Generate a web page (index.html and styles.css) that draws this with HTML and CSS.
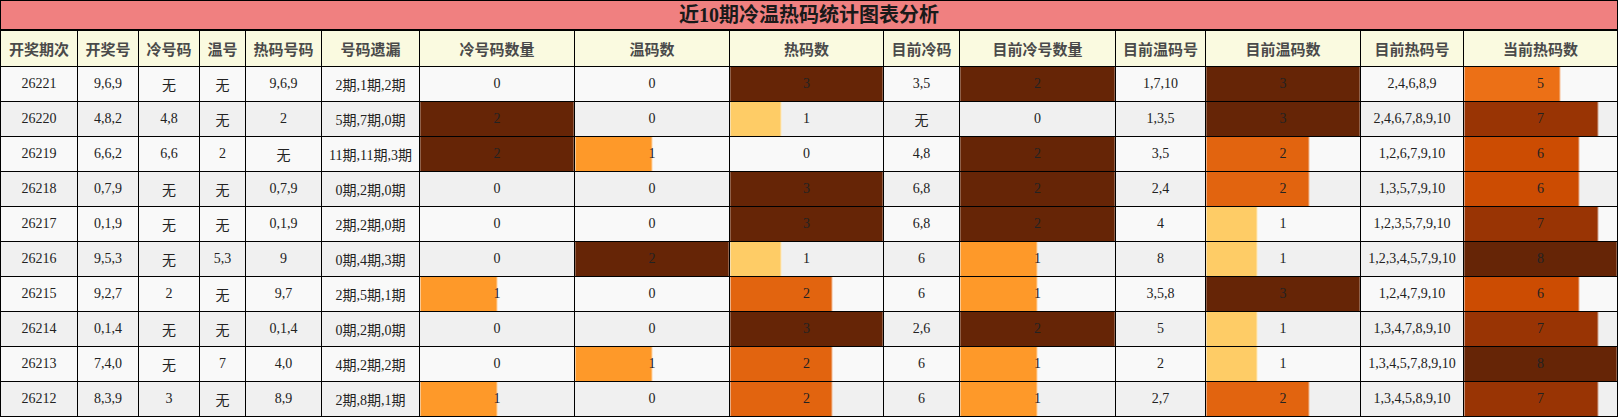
FILE: index.html
```html
<!DOCTYPE html>
<html lang="zh">
<head>
<meta charset="utf-8">
<title>近10期冷温热码统计图表分析</title>
<link rel="stylesheet" href="styles.css">
</head>
<body>
<table class="stats">
<colgroup>
<col class="c77"><col class="c61"><col class="c61"><col class="c46"><col class="c76"><col class="c98">
<col class="c155"><col class="c155"><col class="c154"><col class="c76"><col class="c156"><col class="c90">
<col class="c155"><col class="c103"><col class="c154">
</colgroup>
<thead>
<tr class="title-row"><th colspan="15" class="title">近10期冷温热码统计图表分析</th></tr>
<tr class="head-row">
<th>开奖期次</th><th>开奖号</th><th>冷号码</th><th>温号</th><th>热码号码</th><th>号码遗漏</th>
<th>冷号码数量</th><th>温码数</th><th>热码数</th><th>目前冷码</th><th>目前冷号数量</th><th>目前温码号</th>
<th>目前温码数</th><th>目前热码号</th><th>当前热码数</th>
</tr>
</thead>
<tbody>
<tr>
<td>26221</td><td>9,6,9</td><td>无</td><td>无</td><td>9,6,9</td><td>2期,1期,2期</td>
<td>0</td><td>0</td><td class="bar" style="--w:100%;--c:#662506">3</td><td>3,5</td><td class="bar" style="--w:100%;--c:#662506">2</td><td>1,7,10</td>
<td class="bar" style="--w:100%;--c:#662506">3</td><td>2,4,6,8,9</td><td class="bar" style="--w:62.5%;--c:#ec7016">5</td>
</tr>
<tr>
<td>26220</td><td>4,8,2</td><td>4,8</td><td>无</td><td>2</td><td>5期,7期,0期</td>
<td class="bar" style="--w:100%;--c:#662506">2</td><td>0</td><td class="bar" style="--w:33.33%;--c:#fecc66">1</td><td>无</td><td>0</td><td>1,3,5</td>
<td class="bar" style="--w:100%;--c:#662506">3</td><td>2,4,6,7,8,9,10</td><td class="bar" style="--w:87.5%;--c:#993404">7</td>
</tr>
<tr>
<td>26219</td><td>6,6,2</td><td>6,6</td><td>2</td><td>无</td><td>11期,11期,3期</td>
<td class="bar" style="--w:100%;--c:#662506">2</td><td class="bar" style="--w:50%;--c:#fe9929">1</td><td>0</td><td>4,8</td><td class="bar" style="--w:100%;--c:#662506">2</td><td>3,5</td>
<td class="bar" style="--w:66.67%;--c:#e2640f">2</td><td>1,2,6,7,9,10</td><td class="bar" style="--w:75%;--c:#cc4c02">6</td>
</tr>
<tr>
<td>26218</td><td>0,7,9</td><td>无</td><td>无</td><td>0,7,9</td><td>0期,2期,0期</td>
<td>0</td><td>0</td><td class="bar" style="--w:100%;--c:#662506">3</td><td>6,8</td><td class="bar" style="--w:100%;--c:#662506">2</td><td>2,4</td>
<td class="bar" style="--w:66.67%;--c:#e2640f">2</td><td>1,3,5,7,9,10</td><td class="bar" style="--w:75%;--c:#cc4c02">6</td>
</tr>
<tr>
<td>26217</td><td>0,1,9</td><td>无</td><td>无</td><td>0,1,9</td><td>2期,2期,0期</td>
<td>0</td><td>0</td><td class="bar" style="--w:100%;--c:#662506">3</td><td>6,8</td><td class="bar" style="--w:100%;--c:#662506">2</td><td>4</td>
<td class="bar" style="--w:33.33%;--c:#fecc66">1</td><td>1,2,3,5,7,9,10</td><td class="bar" style="--w:87.5%;--c:#993404">7</td>
</tr>
<tr>
<td>26216</td><td>9,5,3</td><td>无</td><td>5,3</td><td>9</td><td>0期,4期,3期</td>
<td>0</td><td class="bar" style="--w:100%;--c:#662506">2</td><td class="bar" style="--w:33.33%;--c:#fecc66">1</td><td>6</td><td class="bar" style="--w:50%;--c:#fe9929">1</td><td>8</td>
<td class="bar" style="--w:33.33%;--c:#fecc66">1</td><td>1,2,3,4,5,7,9,10</td><td class="bar" style="--w:100%;--c:#662506">8</td>
</tr>
<tr>
<td>26215</td><td>9,2,7</td><td>2</td><td>无</td><td>9,7</td><td>2期,5期,1期</td>
<td class="bar" style="--w:50%;--c:#fe9929">1</td><td>0</td><td class="bar" style="--w:66.67%;--c:#e2640f">2</td><td>6</td><td class="bar" style="--w:50%;--c:#fe9929">1</td><td>3,5,8</td>
<td class="bar" style="--w:100%;--c:#662506">3</td><td>1,2,4,7,9,10</td><td class="bar" style="--w:75%;--c:#cc4c02">6</td>
</tr>
<tr>
<td>26214</td><td>0,1,4</td><td>无</td><td>无</td><td>0,1,4</td><td>0期,2期,0期</td>
<td>0</td><td>0</td><td class="bar" style="--w:100%;--c:#662506">3</td><td>2,6</td><td class="bar" style="--w:100%;--c:#662506">2</td><td>5</td>
<td class="bar" style="--w:33.33%;--c:#fecc66">1</td><td>1,3,4,7,8,9,10</td><td class="bar" style="--w:87.5%;--c:#993404">7</td>
</tr>
<tr>
<td>26213</td><td>7,4,0</td><td>无</td><td>7</td><td>4,0</td><td>4期,2期,2期</td>
<td>0</td><td class="bar" style="--w:50%;--c:#fe9929">1</td><td class="bar" style="--w:66.67%;--c:#e2640f">2</td><td>6</td><td class="bar" style="--w:50%;--c:#fe9929">1</td><td>2</td>
<td class="bar" style="--w:33.33%;--c:#fecc66">1</td><td>1,3,4,5,7,8,9,10</td><td class="bar" style="--w:100%;--c:#662506">8</td>
</tr>
<tr>
<td>26212</td><td>8,3,9</td><td>3</td><td>无</td><td>8,9</td><td>2期,8期,1期</td>
<td class="bar" style="--w:50%;--c:#fe9929">1</td><td>0</td><td class="bar" style="--w:66.67%;--c:#e2640f">2</td><td>6</td><td class="bar" style="--w:50%;--c:#fe9929">1</td><td>2,7</td>
<td class="bar" style="--w:66.67%;--c:#e2640f">2</td><td>1,3,4,5,8,9,10</td><td class="bar" style="--w:87.5%;--c:#993404">7</td>
</tr>
</tbody>
</table>
</body>
</html>
```
FILE: styles.css
```css
html, body {
  margin: 0;
  padding: 0;
  background: #ffffff;
}

.stats {
  border-collapse: collapse;
  table-layout: fixed;
  width: 1618px;
  font-family: "Liberation Serif", "Noto Sans CJK SC", serif;
  font-size: 14px;
  color: #222;
}

.c77 { width: 77px; }
.c61 { width: 61px; }
.c46 { width: 46px; }
.c76 { width: 76px; }
.c98 { width: 98px; }
.c155 { width: 155px; }
.c154 { width: 154px; }
.c156 { width: 156px; }
.c90 { width: 90px; }
.c103 { width: 103px; }

.stats th,
.stats td {
  border: 1px solid #000;
  padding: 0;
  text-align: center;
  vertical-align: middle;
  white-space: nowrap;
  overflow: hidden;
}

.title-row {
  height: 29px;
}

.title {
  background: #f08080;
  border-bottom: 2px solid #000 !important;
  font-family: "Liberation Serif", "Noto Sans CJK SC", serif;
  font-weight: bold;
  font-size: 20px;
  color: #1a1a1a;
  line-height: 26px;
}

.head-row {
  height: 37px;
}

.head-row th {
  background: #fafae0;
  font-family: "Noto Sans CJK SC", sans-serif;
  font-weight: bold;
  font-size: 15px;
  color: #4a4a4a;
  padding-top: 1px;
}

.stats tbody tr {
  height: 35px;
}

.stats tbody tr:nth-child(odd) td {
  background-color: #f9f9f9;
}

.stats tbody tr:nth-child(even) td {
  background-color: #f0f0f0;
}

.stats tbody td.bar {
  background-image: linear-gradient(
    to right,
    var(--c) calc(var(--w) - 1px),
    color-mix(in srgb, var(--c) 45%, #ffffff) calc(var(--w) - 1px),
    color-mix(in srgb, var(--c) 45%, #ffffff) var(--w),
    transparent var(--w)
  );
}
```
